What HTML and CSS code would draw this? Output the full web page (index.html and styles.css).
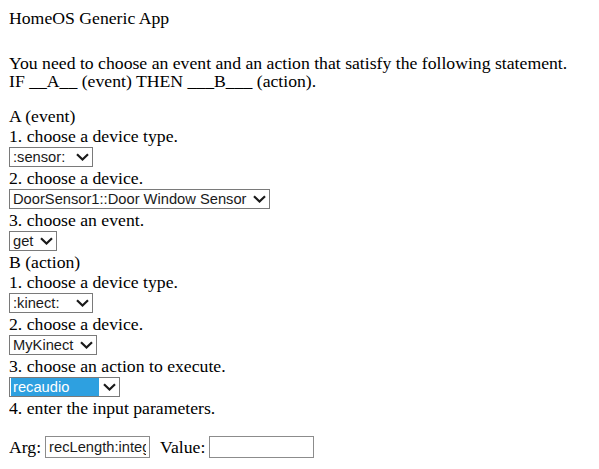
FILE: index.html
```html
<!DOCTYPE html>
<html>
<head>
<meta charset="utf-8">
<title>HomeOS Generic App</title>
<link rel="stylesheet" href="styles.css">
</head>
<body>
<div class="title">HomeOS Generic App</div>
<p class="intro">You need to choose an event and an action that satisfy the following statement.<br>IF __A__ (event) THEN ___B___ (action).</p>

<div class="section">
  <div class="line">A (event)</div>
  <div class="line">1. choose a device type.</div>
  <div class="ctl"><div class="select w-sensor"><span class="val">:sensor:</span><svg class="chev" viewBox="0 0 13 8"><path d="M1 1.2 L6.5 6.5 L12 1.2" /></svg></div></div>
  <div class="line">2. choose a device.</div>
  <div class="ctl"><div class="select w-door"><span class="val">DoorSensor1::Door Window Sensor</span><svg class="chev" viewBox="0 0 13 8"><path d="M1 1.2 L6.5 6.5 L12 1.2" /></svg></div></div>
  <div class="line">3. choose an event.</div>
  <div class="ctl"><div class="select w-get"><span class="val">get</span><svg class="chev" viewBox="0 0 13 8"><path d="M1 1.2 L6.5 6.5 L12 1.2" /></svg></div></div>
  <div class="line">B (action)</div>
  <div class="line">1. choose a device type.</div>
  <div class="ctl"><div class="select w-kinect"><span class="val">:kinect:</span><svg class="chev" viewBox="0 0 13 8"><path d="M1 1.2 L6.5 6.5 L12 1.2" /></svg></div></div>
  <div class="line">2. choose a device.</div>
  <div class="ctl"><div class="select w-mykinect"><span class="val">MyKinect</span><svg class="chev" viewBox="0 0 13 8"><path d="M1 1.2 L6.5 6.5 L12 1.2" /></svg></div></div>
  <div class="line">3. choose an action to execute.</div>
  <div class="ctl"><div class="select w-rec focused"><span class="val">recaudio</span><svg class="chev" viewBox="0 0 13 8"><path d="M1 1.2 L6.5 6.5 L12 1.2" /></svg></div></div>
  <div class="line">4. enter the input parameters.</div>
</div>

<div class="params">
  <span>Arg:</span>
  <input class="field" type="text" value="recLength:integer" readonly>
  <span class="lbl">Value:</span>
  <input class="field w-value" type="text" value="">
</div>
</body>
</html>
```

FILE: styles.css
```css
html, body {
  background: #ffffff;
}
body {
  margin: 8px 9px;
  font-family: "Liberation Serif", "Times New Roman", serif;
  font-size: 17.7px;
  color: #000000;
}
.title {
  line-height: 20px;
}
.intro {
  margin: 26px 0 16px 0;
  line-height: 18px;
}
.line {
  line-height: 20px;
  height: 20px;
  white-space: nowrap;
}
.ctl {
  height: 22px;
  display: flex;
  align-items: center;
}
.select {
  box-sizing: border-box;
  height: 20px;
  border: 1px solid #7a7a7a;
  display: flex;
  align-items: center;
  font-family: "Liberation Sans", Arial, sans-serif;
  font-size: 14.7px;
  color: #1a1a1a;
  background: #ffffff;
  padding: 0 3px 0 2px;
  overflow: hidden;
}
.select .val {
  white-space: nowrap;
  line-height: 18px;
  padding-left: 1px;
}
.chev {
  width: 13px;
  height: 8px;
  margin-left: auto;
  flex: none;
}
.chev path {
  fill: none;
  stroke: #1a1a1a;
  stroke-width: 2.2;
}
.w-sensor { width: 84px; }
.w-door { width: 261px; }
.w-get { width: 48px; }
.w-kinect { width: 84px; }
.w-mykinect { width: 88px; }
.w-rec { width: 111px; }
.focused {
  padding-left: 1px;
}
.focused .val {
  background: #2ea0e0;
  color: #ffffff;
  width: 88px;
  height: 18px;
  padding-left: 2px;
  box-sizing: border-box;
}
.params {
  margin-top: 16px;
  display: flex;
  align-items: center;
  height: 26px;
  white-space: nowrap;
}
.field {
  box-sizing: border-box;
  width: 105px;
  height: 22px;
  border: 1px solid #8c8c8c;
  margin: 0 0 0 4px;
  padding: 0 3px;
  font-family: "Liberation Sans", Arial, sans-serif;
  font-size: 14.7px;
  color: #1a1a1a;
  background: #ffffff;
  outline: none;
}
.lbl {
  margin-left: 10px;
}
.w-value {
  width: 105px;
  margin-left: 4px;
}
```
